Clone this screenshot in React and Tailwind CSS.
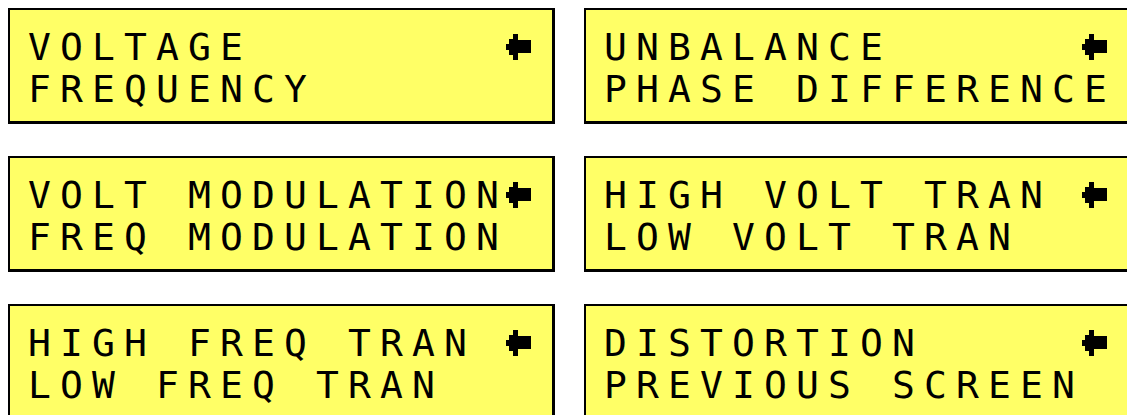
const panels = [
  ["VOLTAGE", "FREQUENCY"],
  ["UNBALANCE", "PHASE DIFFERENCE"],
  ["VOLT MODULATION", "FREQ MODULATION"],
  ["HIGH VOLT TRAN", "LOW VOLT TRAN"],
  ["HIGH FREQ TRAN", "LOW FREQ TRAN"],
  ["DISTORTION", "PREVIOUS SCREEN"],
];

const Arrow = () => (
  <svg
    width="25"
    height="26"
    viewBox="0 0 25 26"
    className="block mt-[8px] -ml-[2px]"
  >
    <polygon
      points="7,0 12,0 12,6 25,6 25,19 12,19 12,26 7,26 7,21 3,21 3,16 0,16 0,10 3,10 3,5 7,5"
      fill="#000"
    />
  </svg>
);

const LcdLine = ({ text, arrow }) => {
  const cells = text.padEnd(16, " ").slice(0, 16).split("");
  return (
    <div className="flex h-[42px]">
      {cells.map((ch, i) => (
        <span key={i} className="inline-block w-[32px] shrink-0">
          {arrow && i === 15 ? <Arrow /> : ch === " " ? "\u00a0" : ch}
        </span>
      ))}
    </div>
  );
};

const Panel = ({ lines }) => (
  <div className="h-[116px] bg-[#ffff66] border-black border-l-2 border-t-2 border-r-[3px] border-b-[3px] pl-[18px] pt-[16px] text-black text-[38px] leading-[42px] font-['DejaVu_Sans_Mono',monospace]">
    <LcdLine text={lines[0]} arrow />
    <LcdLine text={lines[1]} />
  </div>
);

export default function App() {
  return (
    <div className="w-[1127px] h-[415px] overflow-hidden bg-white">
      <div className="grid grid-cols-[547px_547px] gap-x-[29px] gap-y-[32px] pl-[8px] pt-[8px]">
        {panels.map((p, i) => (
          <Panel key={i} lines={p} />
        ))}
      </div>
    </div>
  );
}
